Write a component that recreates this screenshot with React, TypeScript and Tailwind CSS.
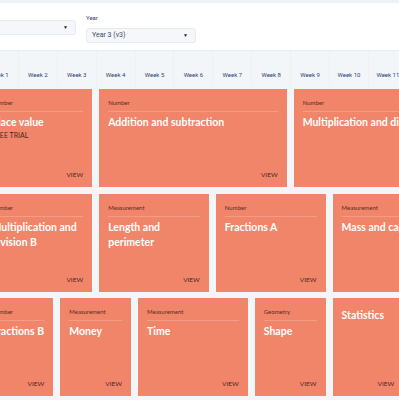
import React from "react"

type Unit = { cat?: string; title: string; start: number; span: number; trial?: boolean; nowrap?: boolean }

const rows: Unit[][] = [
  [
    { cat: "Number", title: "Place value", start: 1, span: 3, trial: true },
    { cat: "Number", title: "Addition and subtraction", start: 4, span: 5 },
    { cat: "Number", title: "Multiplication and division A", start: 9, span: 4, nowrap: true },
  ],
  [
    { cat: "Number", title: "Multiplication and division B", start: 1, span: 3 },
    { cat: "Measurement", title: "Length and perimeter", start: 4, span: 3 },
    { cat: "Number", title: "Fractions A", start: 7, span: 3 },
    { cat: "Measurement", title: "Mass and capacity", start: 10, span: 3, nowrap: true },
  ],
  [
    { cat: "Number", title: "Fractions B", start: 1, span: 2 },
    { cat: "Measurement", title: "Money", start: 3, span: 2 },
    { cat: "Measurement", title: "Time", start: 5, span: 3 },
    { cat: "Geometry", title: "Shape", start: 8, span: 2 },
    { title: "Statistics", start: 10, span: 2 },
  ],
]

const colStart: Record<number, string> = {
  1: "col-start-1", 3: "col-start-3", 4: "col-start-4", 5: "col-start-5",
  7: "col-start-7", 8: "col-start-8", 9: "col-start-9", 10: "col-start-10",
}
const colSpan: Record<number, string> = { 2: "col-span-2", 3: "col-span-3", 4: "col-span-4", 5: "col-span-5" }

const Select = ({ label, value }: { label: string; value: string }) => (
  <div className="flex flex-col">
    <span className="text-[6px] leading-[8px] text-[#2d4374] mb-[6px]">{label}</span>
    <div className="h-[15px] w-[110px] rounded-[3px] border border-[#e6ebf0] bg-[#f5f7fa] flex items-center justify-between pl-[5px] pr-[7px]">
      <span className="text-[7px] text-[#3b4a68]">{value}</span>
      <span className="text-[5px] text-[#222] leading-none">▼</span>
    </div>
  </div>
)

const Card = ({ u }: { u: Unit }) => (
  <div className={`${colStart[u.start]} ${colSpan[u.span]} mx-[3.5px] h-[98px] bg-[#f1856a] flex flex-col px-[9px] pt-[10px] pb-[8px] overflow-hidden`} style={{ fontFamily: "Lato, sans-serif" }}>
    {u.cat && (
      <div className="text-[6px] leading-[8px] text-[#5a2b22] pb-[4px] border-b border-[#f49c84]">{u.cat}</div>
    )}
    <div className={`${u.cat ? "mt-[3px]" : "mt-[0px]"} ${u.nowrap ? "whitespace-nowrap" : ""} text-[10.5px] leading-[15px] font-bold text-white`}>{u.title}</div>
    {u.trial && <div className="text-[7px] leading-[9px] text-[#4b2620] mt-[1px]">FREE TRIAL</div>}
    <div className="mt-auto self-end text-[6.5px] leading-[8px] text-[#4b2620]">VIEW</div>
  </div>
)

export default function App() {
  const weeks = Array.from({ length: 12 }, (_, i) => i + 1)
  return (
    <div className="w-full min-h-[400px] bg-[#f3f6f9] overflow-hidden" style={{ fontFamily: "Roboto, 'Open Sans', sans-serif" }}>
      <div className="h-[3px] bg-[#eff2f5]" />
      <div className="bg-white h-[48px] border-b border-[#e7ecf1] flex items-start pt-[11px] gap-[10px] -ml-[34px]">
        <Select label="" value="" />
        <Select label="Year" value="Year 3 (v3)" />
      </div>
      <div className="-ml-[20px] w-[480px]">
        <div className="grid grid-cols-[repeat(12,38.9px)] h-[36px]">
          {weeks.map(w => (
            <div key={w} className="border-r border-[#edf1f5] flex items-end justify-center pb-[8px]">
              <span className="text-[6px] leading-[8px] text-[#2d4374] whitespace-nowrap">Week {w}</span>
            </div>
          ))}
        </div>
        <div className="pt-[2px] flex flex-col gap-[6.5px] -ml-[1px]">
          {rows.map((r, i) => (
            <div key={i} className="grid grid-cols-[repeat(12,38.9px)]">
              {r.map(u => <Card key={u.title} u={u} />)}
            </div>
          ))}
        </div>
      </div>
    </div>
  )
}
